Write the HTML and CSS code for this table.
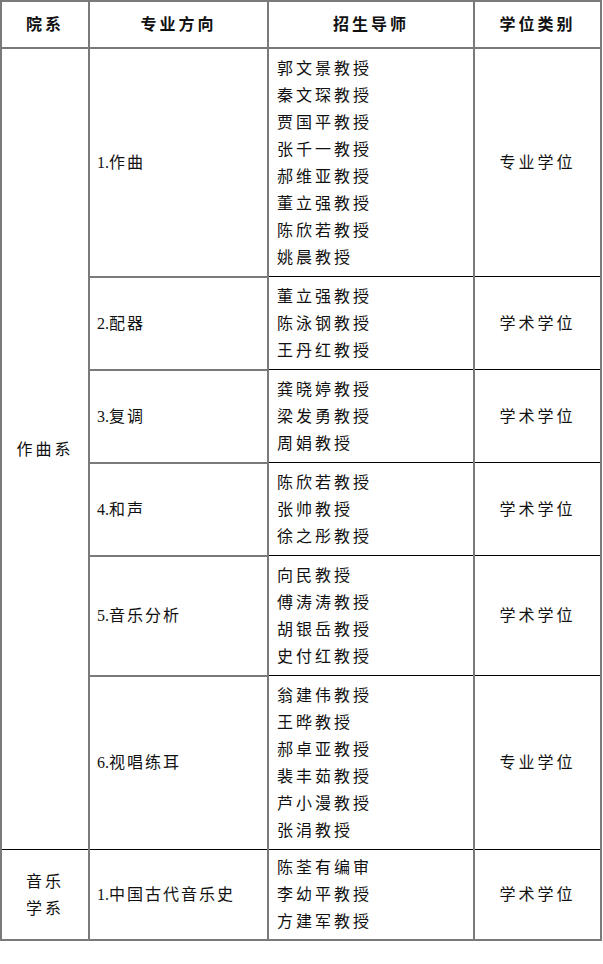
FILE: index.html
```html
<!DOCTYPE html>
<html lang="zh">
<head>
<meta charset="utf-8">
<link rel="stylesheet" href="styles.css">
</head>
<body>
<table class="grid">
  <colgroup>
    <col class="c1"><col class="c2"><col class="c3"><col class="c4">
  </colgroup>
  <thead>
    <tr class="head">
      <th class="g-r">院系</th>
      <th class="g-r">专业方向</th>
      <th>招生导师</th>
      <th class="g-l">学位类别</th>
    </tr>
  </thead>
  <tbody>
    <tr>
      <td class="dept g-r" rowspan="6">作曲系</td>
      <td class="major g-r g-b"><span class="num">1.</span>作曲</td>
      <td class="tutors"><div>郭文景教授</div><div>秦文琛教授</div><div>贾国平教授</div><div>张千一教授</div><div>郝维亚教授</div><div>董立强教授</div><div>陈欣若教授</div><div>姚晨教授</div></td>
      <td class="deg g-l">专业学位</td>
    </tr>
    <tr>
      <td class="major g-r g-b"><span class="num">2.</span>配器</td>
      <td class="tutors"><div>董立强教授</div><div>陈泳钢教授</div><div>王丹红教授</div></td>
      <td class="deg g-l">学术学位</td>
    </tr>
    <tr>
      <td class="major g-r g-b"><span class="num">3.</span>复调</td>
      <td class="tutors"><div>龚晓婷教授</div><div>梁发勇教授</div><div>周娟教授</div></td>
      <td class="deg g-l">学术学位</td>
    </tr>
    <tr>
      <td class="major g-r g-b"><span class="num">4.</span>和声</td>
      <td class="tutors"><div>陈欣若教授</div><div>张帅教授</div><div>徐之彤教授</div></td>
      <td class="deg g-l">学术学位</td>
    </tr>
    <tr>
      <td class="major g-r g-b"><span class="num">5.</span>音乐分析</td>
      <td class="tutors"><div>向民教授</div><div>傅涛涛教授</div><div>胡银岳教授</div><div>史付红教授</div></td>
      <td class="deg g-l">学术学位</td>
    </tr>
    <tr>
      <td class="major g-r"><span class="num">6.</span>视唱练耳</td>
      <td class="tutors"><div>翁建伟教授</div><div>王晔教授</div><div>郝卓亚教授</div><div>裴丰茹教授</div><div>芦小漫教授</div><div>张涓教授</div></td>
      <td class="deg g-l">专业学位</td>
    </tr>
    <tr class="last">
      <td class="dept g-r"><div>音乐</div><div>学系</div></td>
      <td class="major g-r"><span class="num">1.</span>中国古代音乐史</td>
      <td class="tutors"><div>陈荃有编审</div><div>李幼平教授</div><div>方建军教授</div></td>
      <td class="deg g-l">学术学位</td>
    </tr>
  </tbody>
</table>
</body>
</html>
```

FILE: styles.css
```css
html, body {
  margin: 0;
  padding: 0;
  background: #ffffff;
}
body {
  font-family: "Liberation Serif", "Noto Sans CJK SC", serif;
  font-size: 16px;
  color: #111;
}
.grid {
  border-collapse: collapse;
  table-layout: fixed;
  width: 602px;
  margin: 0;
  border: 2px solid #7a7a7a;
}
.c1 { width: 88px; }
.c2 { width: 179px; }
.c3 { width: 206px; }
.c4 { width: 127px; }
.grid th, .grid td {
  border: 1px solid #000;
  padding: 0;
  vertical-align: middle;
  letter-spacing: 3px;
  line-height: 27px;
}
.grid .g-r { border-right: 2px solid #7a7a7a; }
.grid .g-l { border-left: 2px solid #7a7a7a; }
.grid .g-b { border-bottom: 2px solid #7a7a7a; }
.head th {
  height: 45px;
  font-weight: bold;
  text-align: center;
  border-bottom: 2px solid #7a7a7a;
}
.dept {
  text-align: center;
}
.major {
  padding-left: 7px !important;
  letter-spacing: 2px !important;
}
.num {
  letter-spacing: 0;
}
.tutors {
  padding: 6px 0 5px 8px !important;
}
.deg {
  text-align: center;
}
.last .tutors {
  padding: 4px 0 4px 8px !important;
}
.last td {
  border-top: 1px solid #000;
}
```
